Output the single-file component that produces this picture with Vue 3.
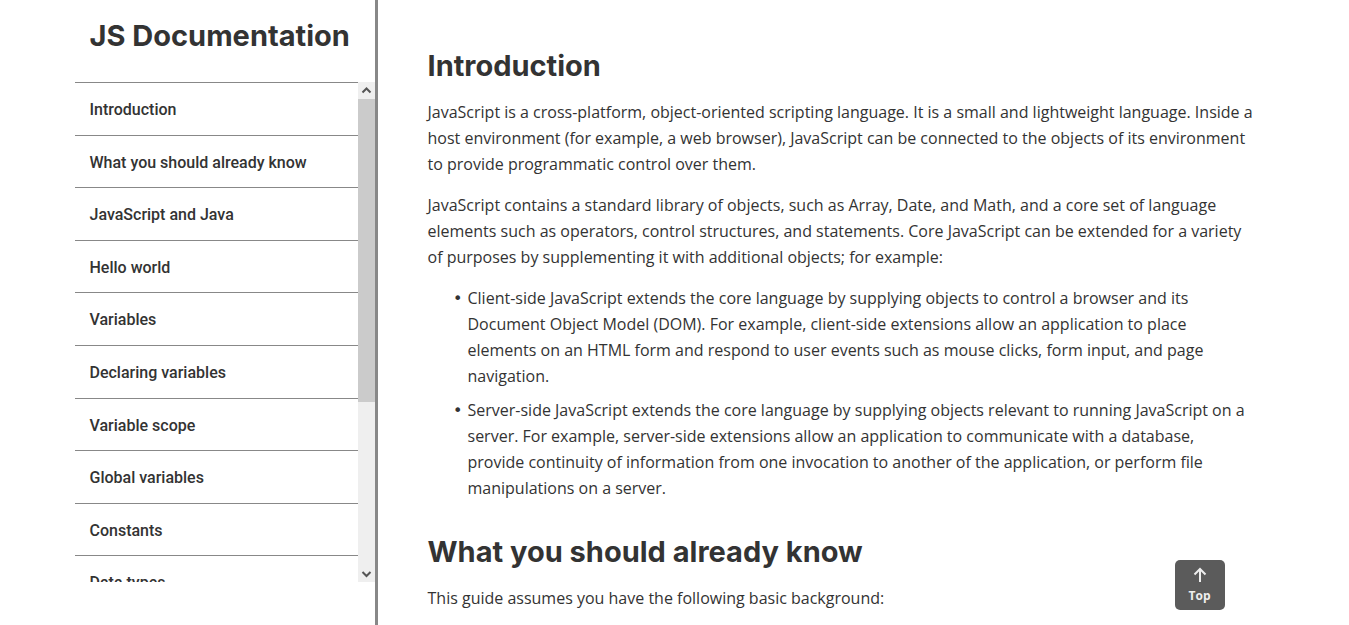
<script setup>
import { ref } from 'vue'

const links = [
  'Introduction',
  'What you should already know',
  'JavaScript and Java',
  'Hello world',
  'Variables',
  'Declaring variables',
  'Variable scope',
  'Global variables',
  'Constants',
  'Data types',
]

const list = ref(null)
const main = ref(null)

const slug = (text) => text.replaceAll(' ', '_')
const scrollList = (amount) => list.value.scrollBy({ top: amount })
const toTop = () => main.value.scrollTo({ top: 0, behavior: 'smooth' })
</script>

<template>
  <div class="page">
    <nav class="sidebar">
      <h1 class="brand">JS Documentation</h1>
      <div class="menu">
        <div ref="list" class="viewport">
          <ul class="links">
            <li v-for="link in links" :key="link">
              <a :href="'#' + slug(link)">{{ link }}</a>
            </li>
          </ul>
        </div>
        <div class="scrollbar">
          <button type="button" aria-label="Scroll up" @click="scrollList(-52)">
            <svg viewBox="0 0 17 17"><path d="M4.5 10.5 8.5 6.5l4 4" /></svg>
          </button>
          <div class="track"><div class="thumb"></div></div>
          <button type="button" aria-label="Scroll down" @click="scrollList(52)">
            <svg viewBox="0 0 17 17"><path d="M4.5 7 8.5 11l4-4" /></svg>
          </button>
        </div>
      </div>
    </nav>

    <main ref="main" class="content">
      <section id="Introduction">
        <h2>Introduction</h2>
        <p>
          JavaScript is a cross-platform, object-oriented scripting language. It is a small and
          lightweight language. Inside a host environment (for example, a web browser), JavaScript
          can be connected to the objects of its environment to provide programmatic control over
          them.
        </p>
        <p>
          JavaScript contains a standard library of objects, such as Array, Date, and Math, and a
          core set of language elements such as operators, control structures, and statements. Core
          JavaScript can be extended for a variety of purposes by supplementing it with additional
          objects; for example:
        </p>
        <ul class="bullets">
          <li>
            Client-side JavaScript extends the core language by supplying objects to control a
            browser and its Document Object Model (DOM). For example, client-side extensions allow
            an application to place elements on an HTML form and respond to user events such as
            mouse clicks, form input, and page navigation.
          </li>
          <li>
            Server-side JavaScript extends the core language by supplying objects relevant to
            running JavaScript on a server. For example, server-side extensions allow an application
            to communicate with a database, provide continuity of information from one invocation to
            another of the application, or perform file manipulations on a server.
          </li>
        </ul>
      </section>
      <section id="What_you_should_already_know">
        <h2>What you should already know</h2>
        <p>This guide assumes you have the following basic background:</p>
      </section>
    </main>

    <button type="button" class="top" @click="toTop">
      <svg viewBox="0 0 14 16"><path d="M7 15V2M1.5 7.5 7 2l5.5 5.5" /></svg>
      <span>Top</span>
    </button>
  </div>
</template>

<style>
body {
  background: #fff;
}
</style>

<style scoped>
.page {
  position: relative;
  display: flex;
  max-width: 1200px;
  height: 100vh;
  margin: 0 auto;
  overflow: hidden;
  color: #333;
  font: 16px/26px "Open Sans", sans-serif;
}

.sidebar {
  flex: 0 0 300px;
  border-right: 3px solid #888;
}

.brand,
h2 {
  margin: 0;
  font: 700 29px/40px Inter, sans-serif;
}

.brand {
  padding: 16px 15px 26px;
  white-space: nowrap;
}

.menu {
  display: flex;
  height: 80vh;
}

.viewport {
  flex: 1;
  overflow: hidden;
}

.links {
  display: grid;
  grid-auto-rows: 1fr;
  min-height: 526px;
  margin: 0;
  padding: 0;
  list-style: none;
}

.links a {
  display: block;
  padding: 14px 15px 11px;
  border-top: 1px solid #888;
  color: #333;
  font-family: Roboto, sans-serif;
  font-weight: 500;
  text-decoration: none;
}

.scrollbar {
  display: flex;
  flex: 0 0 17px;
  flex-direction: column;
  background: #efefef;
}

.scrollbar button {
  height: 17px;
  padding: 0;
  border: 0;
  background: none;
}

.scrollbar svg {
  display: block;
  width: 17px;
  height: 17px;
  fill: none;
  stroke: #555;
  stroke-width: 2;
}

.track {
  flex: 1;
}

.thumb {
  height: 65%;
  background: #cbcbcb;
}

.content {
  flex: 1;
  padding: 46px 20px 0 50px;
  overflow: hidden;
}

h2 {
  margin-bottom: 13px;
}

p {
  margin: 0 0 15px;
}

.bullets {
  margin: 0 0 31px;
  padding-left: 40px;
  list-style-type: "•\00a0";
}

.bullets li::marker {
  font-family: "DejaVu Sans", sans-serif;
}

.bullets li + li {
  margin-top: 8px;
}

.top {
  position: absolute;
  right: 50px;
  bottom: 15px;
  display: flex;
  flex-direction: column;
  align-items: center;
  justify-content: center;
  gap: 5px;
  width: 50px;
  height: 50px;
  padding: 0;
  border: 0;
  border-radius: 5px;
  background: #5b5b5b;
  color: #eee;
  font: 700 12px/16px "Open Sans", sans-serif;
}

.top svg {
  width: 14px;
  height: 16px;
  fill: none;
  stroke: #eee;
  stroke-width: 2;
}
</style>
